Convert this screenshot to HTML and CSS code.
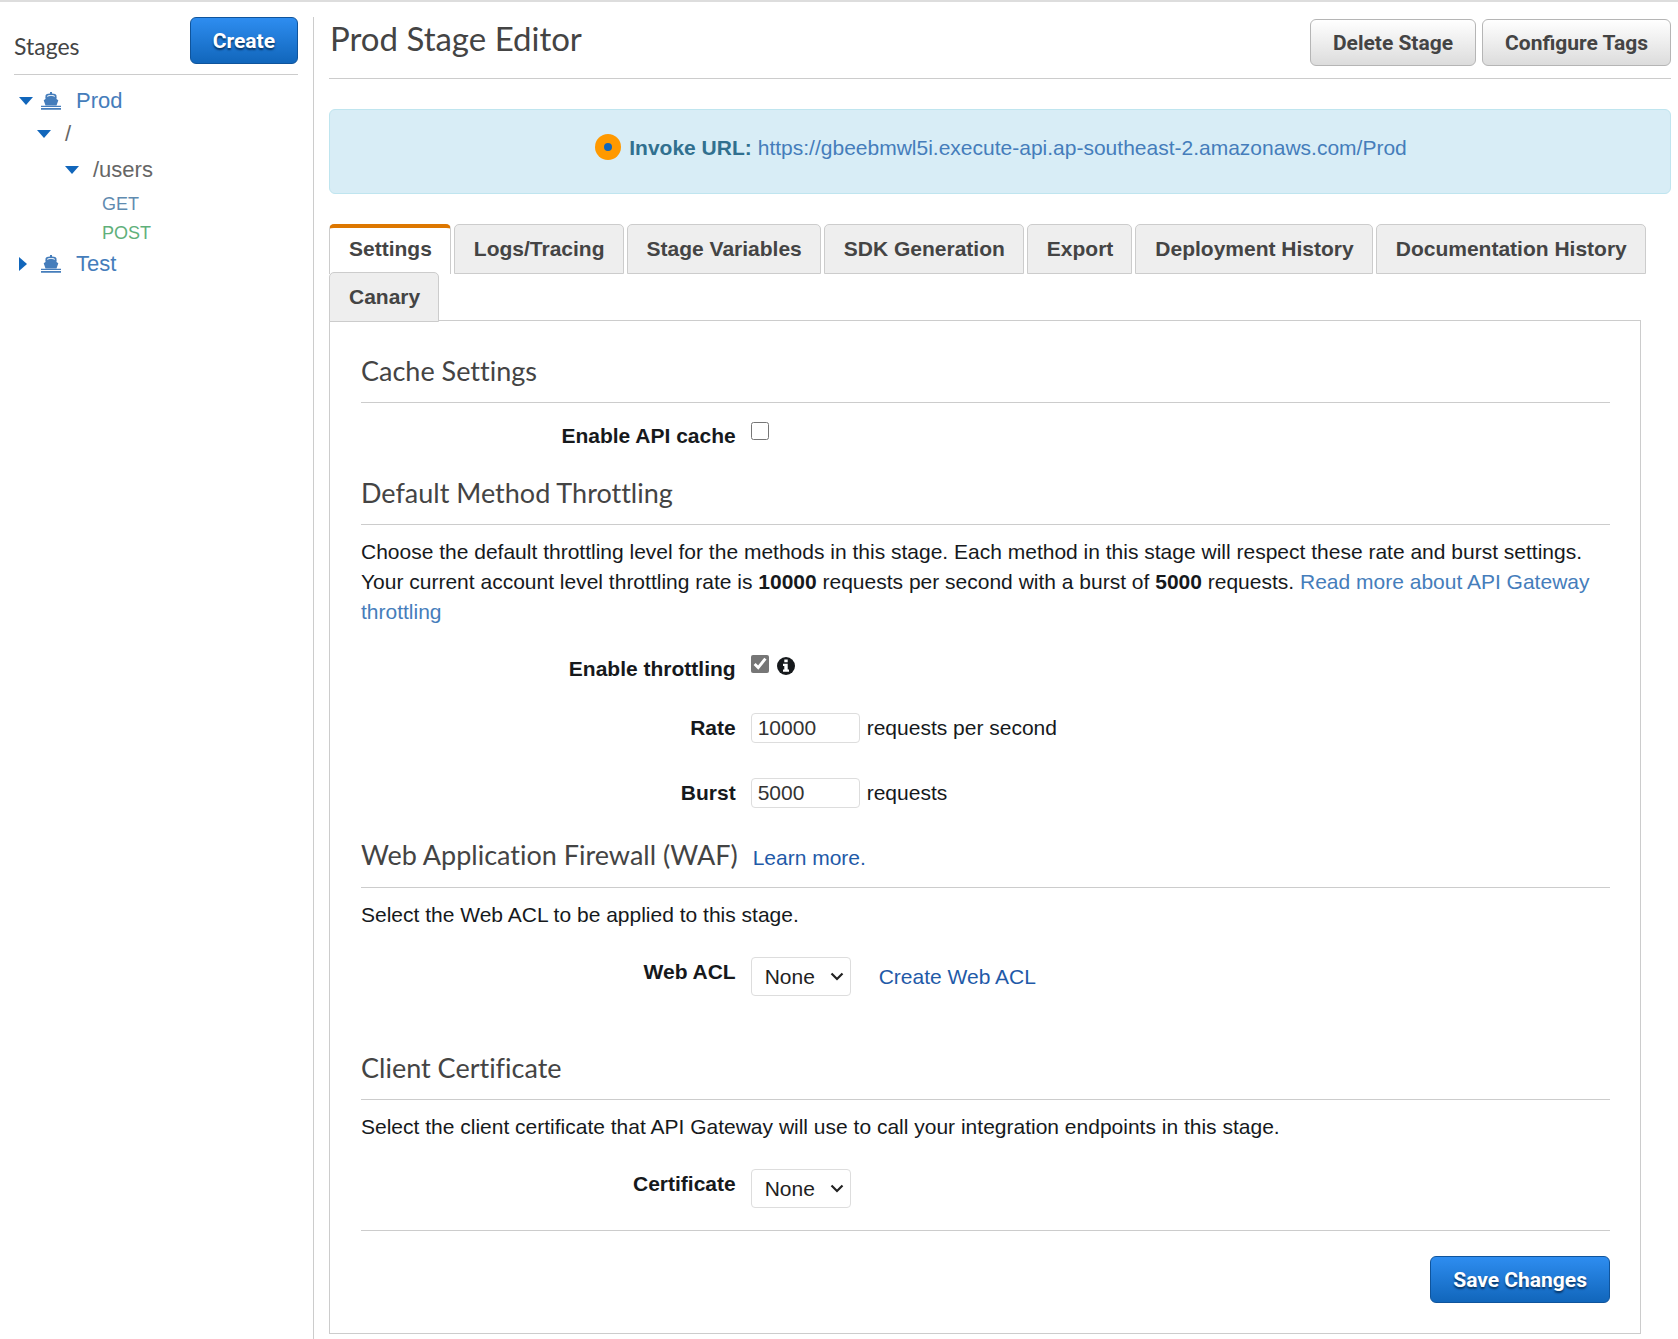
FILE: index.html
```html
<!DOCTYPE html>
<html lang="en">
<head>
<meta charset="utf-8">
<title>Prod Stage Editor</title>
<link rel="stylesheet" href="styles.css">
</head>
<body>
<svg class="sprite" aria-hidden="true">
  <symbol id="ship" viewBox="0 0 20 18">
    <path d="M4.500 5.500V3.500Q5 1.700 9 1.500V0h2v1.500Q15 1.700 15.500 3.500v2H14V4Q13 2.900 10 2.900T6 4v1.500z"/>
    <path d="M10 3.700l5.500 1.300v2l1.800 1.200-1.800 5.200h-11L2.700 8.200 4.500 7V5z"/>
    <path d="M0 13.700h20v1.400H0zM0 16h20v1.700H0z"/>
  </symbol>
  <symbol id="down" viewBox="0 0 14 8"><path d="M0 0h14L7 8z"/></symbol>
  <symbol id="right" viewBox="0 0 8 14"><path d="M0 0v14l8-7z"/></symbol>
  <symbol id="chevron" viewBox="0 0 14 9"><path d="M1.500 1.500L7 7l5.500-5.500" fill="none" stroke="#222" stroke-width="2.200"/></symbol>
</svg>
<div class="app">
  <nav class="sidebar" aria-label="Stages">
    <div class="sidebar-head">
      <h2>Stages</h2>
      <button class="btn btn-primary" type="button">Create</button>
    </div>
    <ul class="tree">
      <li class="stage"><svg class="caret"><use href="#down"/></svg><svg class="ship"><use href="#ship"/></svg><a href="#prod">Prod</a></li>
      <li class="root"><svg class="caret"><use href="#down"/></svg><span>/</span></li>
      <li class="resource"><svg class="caret"><use href="#down"/></svg><span>/users</span></li>
      <li class="method"><a class="get" href="#get">GET</a></li>
      <li class="method"><a class="post" href="#post">POST</a></li>
      <li class="stage closed"><svg class="caret"><use href="#right"/></svg><svg class="ship"><use href="#ship"/></svg><a href="#test">Test</a></li>
    </ul>
  </nav>
  <main class="main">
    <header class="page-head">
      <h1>Prod Stage Editor</h1>
      <div class="actions">
        <button class="btn" type="button">Delete Stage</button>
        <button class="btn" type="button">Configure Tags</button>
      </div>
    </header>
    <div class="banner">
      <svg class="dot" viewBox="0 0 26 26" aria-hidden="true"><circle cx="13" cy="13" r="13" fill="#f90"/><circle cx="13" cy="13" r="4" fill="#1166bb"/></svg>
      <strong>Invoke URL:</strong>
      <a href="https://gbeebmwl5i.execute-api.ap-southeast-2.amazonaws.com/Prod">https://gbeebmwl5i.execute-api.ap-southeast-2.amazonaws.com/Prod</a>
    </div>
    <div class="tabs" role="tablist">
      <button class="tab active" role="tab" aria-selected="true" type="button">Settings</button>
      <button class="tab" role="tab" type="button">Logs/Tracing</button>
      <button class="tab" role="tab" type="button">Stage Variables</button>
      <button class="tab" role="tab" type="button">SDK Generation</button>
      <button class="tab" role="tab" type="button">Export</button>
      <button class="tab" role="tab" type="button">Deployment History</button>
      <button class="tab" role="tab" type="button">Documentation History</button>
      <button class="tab" role="tab" type="button">Canary</button>
    </div>
    <form class="panel">
      <section class="cache">
        <h2>Cache Settings</h2>
        <div class="row">
          <label for="cache">Enable API cache</label>
          <div class="field top"><input id="cache" type="checkbox"></div>
        </div>
      </section>
      <section class="throttling">
        <h2>Default Method Throttling</h2>
        <p>Choose the default throttling level for the methods in this stage. Each method in this stage will respect these rate and burst settings. Your current account level throttling rate is <strong>10000</strong> requests per second with a burst of <strong>5000</strong> requests. <a href="#throttling">Read more about API Gateway throttling</a></p>
        <div class="row">
          <label for="throttle">Enable throttling</label>
          <div class="field top"><input id="throttle" type="checkbox" checked>
            <svg class="info" viewBox="0 0 18 18" aria-hidden="true"><circle cx="9" cy="9" r="9" fill="#16191c"/><path d="M7.300 2.500h3.400v2.700H7.300zM6 6.700h4.700v5.800H12v2.200H6v-2.200h1.300V8.900H6z" fill="#fff"/></svg></div>
        </div>
        <div class="row">
          <label for="rate">Rate</label>
          <div class="field"><input id="rate" type="text" value="10000"><span>requests per second</span></div>
        </div>
        <div class="row">
          <label for="burst">Burst</label>
          <div class="field"><input id="burst" type="text" value="5000"><span>requests</span></div>
        </div>
      </section>
      <section class="waf">
        <h2>Web Application Firewall (WAF) <a class="deep" href="#waf">Learn more.</a></h2>
        <p>Select the Web ACL to be applied to this stage.</p>
        <div class="row">
          <label for="acl">Web ACL</label>
          <div class="field"><span class="select"><select id="acl"><option>None</option></select><svg><use href="#chevron"/></svg></span><a class="deep create" href="#acl">Create Web ACL</a></div>
        </div>
      </section>
      <section class="certificate">
        <h2>Client Certificate</h2>
        <p>Select the client certificate that API Gateway will use to call your integration endpoints in this stage.</p>
        <div class="row">
          <label for="cert">Certificate</label>
          <div class="field"><span class="select"><select id="cert"><option>None</option></select><svg><use href="#chevron"/></svg></span></div>
        </div>
      </section>
      <footer class="panel-foot"><button class="btn btn-primary" type="button">Save Changes</button></footer>
    </form>
  </main>
</div>
</body>
</html>
```
FILE: styles.css
```css
* {
  box-sizing: border-box;
}

body {
  margin: 0;
  border-top: 2px solid #ddd;
  background: #fff;
  color: #16191c;
  font: 21px/30px "Liberation Sans", Arial, sans-serif;
}

h1,
h2,
p,
ul {
  margin: 0;
  padding: 0;
}

a {
  color: #457dbb;
  text-decoration: none;
}

.deep {
  color: #1f5aa8;
}

.sprite {
  display: none;
}

.app {
  display: flex;
  min-height: calc(100vh - 2px);
  padding: 15px 7px 0 14px;
}

/* Sidebar */
.sidebar {
  flex: none;
  width: 300px;
  padding-right: 15px;
  border-right: 1px solid #ccc;
}

.sidebar-head {
  display: flex;
  justify-content: space-between;
  align-items: flex-start;
  height: 58px;
  border-bottom: 1px solid #ccc;
}

.sidebar-head h2 {
  padding-top: 14px;
  color: #444;
  font: 400 23px/30px Lato, sans-serif;
}

.tree {
  padding-top: 9px;
  list-style: none;
  font-size: 22px;
}

.tree li {
  display: flex;
  align-items: center;
  height: 34px;
  color: #666;
}

.caret {
  width: 14px;
  height: 8px;
  fill: #1166bb;
}

.ship {
  width: 20px;
  height: 18px;
  margin: 0 15px 0 8px;
  fill: #457dbb;
}

.tree .stage {
  padding-left: 5px;
}

.closed .caret {
  width: 8px;
  height: 14px;
  margin-right: 6px;
}

.tree .root {
  gap: 14px;
  padding-left: 23px;
  height: 32px;
}

.tree .resource {
  gap: 14px;
  padding-left: 51px;
  height: 39px;
}

.tree .method {
  padding-left: 88px;
  height: 29px;
  font-size: 18px;
}

.get {
  color: #5f8bb0;
}

.post {
  color: #5fb07a;
}

/* Buttons */
.btn {
  height: 47px;
  padding: 0 22px;
  border: 1px solid #b5b5b5;
  border-radius: 6px;
  background: linear-gradient(#fff, #dcdcdc);
  color: #444;
  font: 700 21px/30px Roboto, sans-serif;
}

.btn-primary {
  border-color: #0f549c;
  background: linear-gradient(#2e8df0, #1166bb);
  color: #fff;
  text-shadow: 0 2px 2px #063261;
}

/* Main column */
.main {
  flex: 1;
  min-width: 0;
  padding-left: 15px;
}

.page-head {
  display: flex;
  justify-content: space-between;
  height: 62px;
  border-bottom: 1px solid #ccc;
}

.page-head h1 {
  padding-left: 1px;
  color: #444;
  font: 400 33px/42px Lato, sans-serif;
}

.actions {
  display: flex;
  gap: 6px;
  padding-top: 2px;
}

.banner {
  display: flex;
  justify-content: center;
  gap: 6px;
  height: 85px;
  margin: 30px 0;
  padding-top: 23px;
  border: 1px solid #bfe5ef;
  border-radius: 6px;
  background: #d8edf6;
}

.banner strong {
  color: #31708f;
}

.dot {
  width: 26px;
  height: 26px;
  margin: 1px 2px;
}

/* Tabs */
.tabs {
  display: flex;
  flex-wrap: wrap;
  gap: 0 3px;
}

.tab {
  height: 50px;
  margin-bottom: -2px;
  padding: 0 18px 0 19px;
  border: 1px solid #ccc;
  border-radius: 5px 5px 0 0;
  background: #eee;
  color: #444;
  font: 700 21px/30px "Liberation Sans", Arial, sans-serif;
}

.tab.active {
  padding-bottom: 4px;
  border-top: 4px solid #dd7700;
  border-bottom: 0;
  background: #fff;
}

/* Settings panel */
.panel {
  margin-right: 30px;
  padding: 33px 30px 30px 31px;
  border: 1px solid #ccc;
}

.panel h2 {
  padding-bottom: 14px;
  border-bottom: 1px solid #ccc;
  color: #444;
  font: 400 27px/34px Lato, sans-serif;
}

h1,
.panel h2,
.sidebar-head h2 {
  font-variant-ligatures: none;
}

.panel h2 a {
  margin-left: 8px;
  font: 21px/30px "Liberation Sans", Arial, sans-serif;
}

.panel p {
  padding: 12px 0 27px;
}

.row {
  display: grid;
  grid-template-columns: 30% 1fr;
  gap: 15px;
}

.row label {
  font-weight: 700;
  text-align: right;
}

.field {
  display: flex;
  align-items: center;
}

.field.top {
  align-items: flex-start;
  gap: 8px;
}

.cache .row {
  padding: 18px 0 25px;
}

.throttling .row {
  padding-bottom: 29px;
}

.throttling .row + .row {
  padding-bottom: 35px;
}

.throttling .row:last-child {
  padding-bottom: 30px;
}

.waf .row {
  padding-bottom: 55px;
}

.certificate .row {
  padding-bottom: 22px;
}

input[type="checkbox"] {
  width: 18px;
  height: 18px;
  margin: 1px 0;
  accent-color: #767676;
}

.info {
  width: 18px;
  height: 18px;
  margin-top: 3px;
}

input[type="text"] {
  width: 109px;
  height: 30px;
  margin-right: 7px;
  padding: 0 6px;
  border: 1px solid #ddd;
  border-radius: 4px;
  color: #333;
  font: 21px/28px "Liberation Sans", Arial, sans-serif;
}

.select {
  display: grid;
  align-items: center;
  width: 100px;
}

.select select,
.select svg {
  grid-area: 1 / 1;
}

.select select {
  height: 39px;
  padding: 0 13px;
  border: 1px solid #ddd;
  border-radius: 4px;
  appearance: none;
  background: #fff;
  color: #222;
  font: 21px/30px "Liberation Sans", Arial, sans-serif;
}

.select svg {
  justify-self: end;
  width: 14px;
  height: 9px;
  margin-right: 7px;
  pointer-events: none;
}

.create {
  margin-left: 28px;
}

.panel-foot {
  display: flex;
  justify-content: flex-end;
  padding-top: 25px;
  border-top: 1px solid #ccc;
}
```
